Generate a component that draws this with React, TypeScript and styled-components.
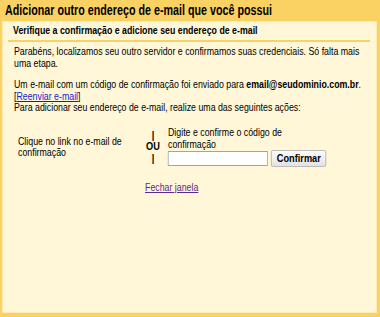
import React from "react";
import styled, { createGlobalStyle } from "styled-components";

// the dialog is drawn with horizontally condensed text
const TITLE_SQUEEZE = 0.75;
const BODY_SQUEEZE = 0.8;

const GlobalStyle = createGlobalStyle`
  html, body {
    margin: 0;
    padding: 0;
    overflow: hidden;
    background: #fad163;
  }
`;

const Frame = styled.div`
  box-sizing: border-box;
  width: 380px;
  height: 317px;
  background: #fad163;
  padding: 0 3px 4px 2px;
  display: flex;
  flex-direction: column;
  font-family: "Liberation Sans", Arial, sans-serif;
  color: #000;
`;

const Title = styled.h1`
  margin: 0;
  padding: 1px 0 0 4px;
  height: 21px;
  box-sizing: border-box;
  font-size: 14.3px;
  font-weight: bold;
  line-height: 19px;
  white-space: nowrap;
  transform: scaleX(${TITLE_SQUEEZE});
  transform-origin: left top;
`;

const Panel = styled.div`
  flex: 1;
  background: #fff7d7;
  border: 1px solid #fdebb0;
  overflow: hidden;
`;

const Content = styled.div`
  box-sizing: border-box;
  width: calc(100% / ${BODY_SQUEEZE});
  padding: 1px 7px 0 6px;
  font-size: 11px;
  line-height: 11.5px;
  transform: scaleX(${BODY_SQUEEZE});
  transform-origin: left top;
`;

const SubTitle = styled.h2`
  margin: 0;
  padding: 0 6.5px 3px;
  font-size: 11px;
  line-height: 14px;
  font-weight: bold;
  border-bottom: 2px solid #fad163;
`;

const Paragraph = styled.p<{ $top: number }>`
  margin: ${(p) => p.$top}px 0 0;
  padding: 0 0 0 7.75px;
`;

const Link = styled.a<{ $visited?: boolean }>`
  color: ${(p) => (p.$visited ? "#5b2a8c" : "#1a1acc")};
  text-decoration: underline;
  cursor: pointer;
`;

const Actions = styled.div`
  display: flex;
  align-items: center;
  margin: 13.5px 0 0 12.75px;
`;

const Option = styled.div<{ $width: number }>`
  width: ${(p) => p.$width}px;
`;

const Or = styled.div`
  width: 30px;
  margin-right: 3.75px;
  display: flex;
  flex-direction: column;
  align-items: center;
  font-weight: bold;
  font-size: 11.5px;
`;

const Field = styled.div`
  display: flex;
  align-items: center;
  gap: 4px;
  width: max-content;
`;

const CodeInput = styled.input`
  box-sizing: border-box;
  width: 125px;
  height: 15px;
  margin: 0;
  border: 1px solid #8fa6c4;
  padding: 0 2px;
  font-size: 11px;
  background: #fff;
  outline: none;
`;

const Button = styled.button`
  box-sizing: border-box;
  height: 17px;
  margin: 0;
  padding: 0 6px;
  font-family: "Liberation Sans", Arial, sans-serif;
  font-size: 11.5px;
  font-weight: bold;
  line-height: 15px;
  background: linear-gradient(#fcfcfc, #e2e2e2);
  border: 1px solid #b3b3b3;
  border-radius: 2px;
  color: #000;
`;

const Close = styled.div`
  margin: 15px 0 0 171.5px;
`;

export default function App() {
  return (
    <>
      <GlobalStyle />
      <Frame>
        <Title>Adicionar outro endereço de e-mail que você possui</Title>
        <Panel>
          <Content>
            <SubTitle>Verifique a confirmação e adicione seu endereço de e-mail</SubTitle>
            <Paragraph $top={4}>
              Parabéns, localizamos seu outro servidor e confirmamos suas credenciais. Só falta mais
              uma etapa.
            </Paragraph>
            <Paragraph $top={10}>
              Um e-mail com um código de confirmação foi enviado para <b>email@seudominio.com.br</b>.
              <br />[<Link>Reenviar e-mail</Link>]
              <br />
              Para adicionar seu endereço de e-mail, realize uma das seguintes ações:
            </Paragraph>
            <Actions>
              <Option $width={153.75}>Clique no link no e-mail de confirmação</Option>
              <Or>
                <span>|</span>
                <span>OU</span>
                <span>|</span>
              </Or>
              <Option $width={197}>
                Digite e confirme o código de confirmação
                <Field>
                  <CodeInput type="text" />
                  <Button>Confirmar</Button>
                </Field>
              </Option>
            </Actions>
            <Close>
              <Link $visited>Fechar janela</Link>
            </Close>
          </Content>
        </Panel>
      </Frame>
    </>
  );
}
